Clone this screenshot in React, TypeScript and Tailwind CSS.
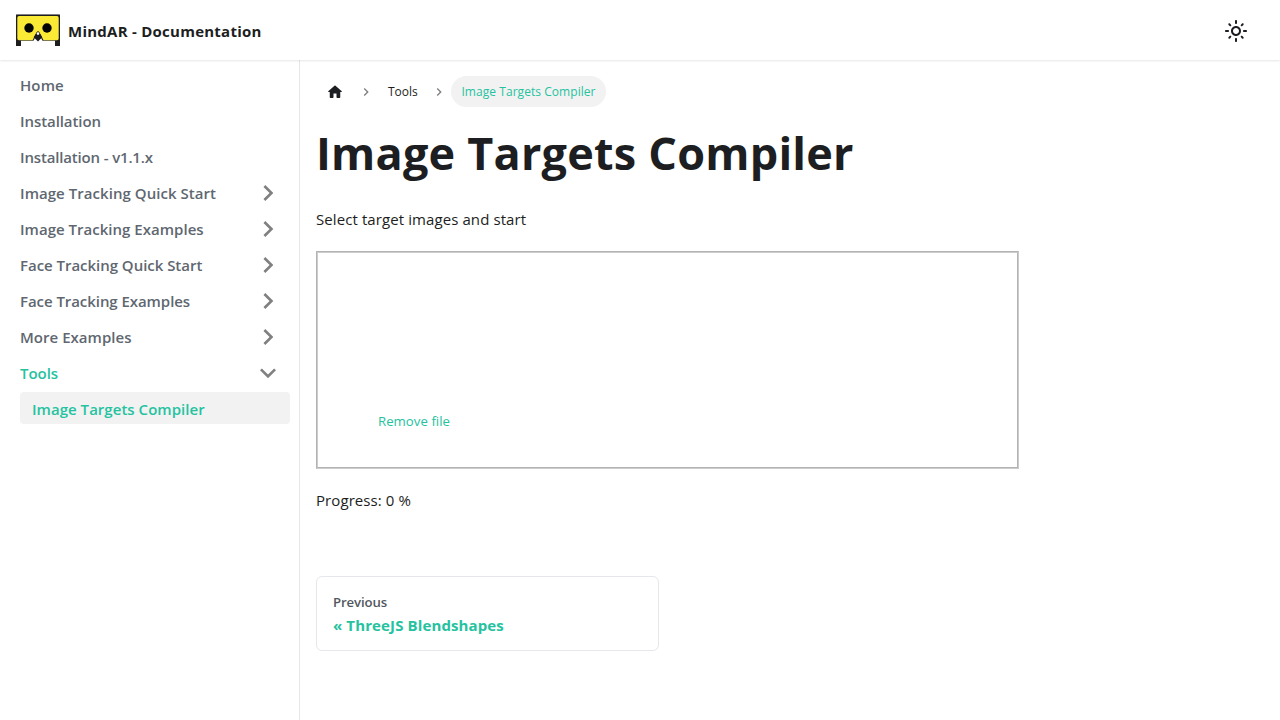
type Item = { label: string; tracking: string; expandable?: boolean };

const items: Item[] = [
  { label: "Home", tracking: "tracking-[0.1px]" },
  { label: "Installation", tracking: "tracking-[-0.08px]" },
  { label: "Installation - v1.1.x", tracking: "tracking-[-0.16px]" },
  { label: "Image Tracking Quick Start", tracking: "tracking-[0.05px]", expandable: true },
  { label: "Image Tracking Examples", tracking: "tracking-[0.02px]", expandable: true },
  { label: "Face Tracking Quick Start", tracking: "tracking-[-0.03px]", expandable: true },
  { label: "Face Tracking Examples", tracking: "tracking-[-0.06px]", expandable: true },
  { label: "More Examples", tracking: "tracking-[0.03px]", expandable: true },
];

function Caret({ className }: { className: string }) {
  return (
    <svg viewBox="0 0 24 24" className={"size-8 shrink-0 fill-[#808080] " + className}>
      <path d="M7.41 15.41L12 10.83l4.59 4.58L18 14l-6-6-6 6z" />
    </svg>
  );
}

function Separator() {
  return (
    <svg viewBox="0 0 24 24" className="size-4 rotate-90 fill-[#7f7f7f]">
      <path d="M7.41 15.41L12 10.83l4.59 4.58L18 14l-6-6-6 6z" />
    </svg>
  );
}

function Logo() {
  return (
    <svg viewBox="0 0 44 33" className="h-[33px] w-11">
      <path d="M0 1.5Q0 .3 1.2 .3H42.8Q44 .3 44 1.5V32H39V27H5V32H0Z" fill="#1d1d1f" />
      <path d="M5 26.8H39V33H5Z" fill="#fff" />
      <path d="M0.5 0.2H43.5V1H0.5Z" fill="#8c8c90" />
      <path d="M3 2H41Q42.7 2 42.7 3.7V24.4Q42.7 26.2 41 26.2H27.5L23.5 18.6Q22 16.2 20.5 18.6L16.6 26.2H3Q1.3 26.2 1.3 24.4V3.7Q1.3 2 3 2Z" fill="#fae935" />
      <path d="M17.2 27.5L20.5 20.5H23.5L26.8 27.5Z" fill="#fff" />
      <path d="M22 17L24 19.4L26.3 23.2L22 27.6L17.7 23.2L20 19.4Z" fill="#1d1d1f" />
      <circle cx="22" cy="19.6" r="1.3" fill="#fff" />
      <circle cx="13" cy="14" r="4.7" fill="#050505" />
      <circle cx="31" cy="14" r="4.7" fill="#050505" />
    </svg>
  );
}

export default function App() {
  return (
    <div className="flex h-[720px] w-[1280px] flex-col overflow-hidden bg-white font-['Open_Sans','Noto_Sans',sans-serif] text-[15px] text-[#1c1e21]">
      <header className="z-10 flex h-[60px] shrink-0 items-center justify-between bg-white pr-8 pl-4 shadow-[0_1px_2px_0_rgba(0,0,0,0.1)]">
        <a className="flex items-center">
          <Logo />
          <span className="ml-2 pt-px leading-6 font-bold tracking-[0.25px]">MindAR - Documentation</span>
        </a>
        <svg viewBox="0 0 24 24" className="mt-px size-6 fill-[#1c1e21]">
          <path d="M12,9c1.65,0,3,1.35,3,3s-1.35,3-3,3s-3-1.35-3-3S10.35,9,12,9 M12,7c-2.76,0-5,2.24-5,5s2.24,5,5,5s5-2.24,5-5 S14.76,7,12,7L12,7z M2,13l2,0c0.55,0,1-0.45,1-1s-0.45-1-1-1l-2,0c-0.55,0-1,0.45-1,1S1.45,13,2,13z M20,13l2,0c0.55,0,1-0.45,1-1 s-0.45-1-1-1l-2,0c-0.55,0-1,0.45-1,1S19.45,13,20,13z M11,2v2c0,0.55,0.45,1,1,1s1-0.45,1-1V2c0-0.55-0.45-1-1-1S11,1.45,11,2z M11,20v2c0,0.55,0.45,1,1,1s1-0.45,1-1v-2c0-0.55-0.45-1-1-1C11.45,19,11,19.45,11,20z M5.99,4.58c-0.39-0.39-1.03-0.39-1.41,0 c-0.39,0.39-0.39,1.03,0,1.41l1.06,1.06c0.39,0.39,1.03,0.39,1.41,0s0.39-1.03,0-1.41L5.99,4.58z M18.36,16.95 c-0.39-0.39-1.03-0.39-1.41,0c-0.39,0.39-0.39,1.03,0,1.41l1.06,1.06c0.39,0.39,1.03,0.39,1.41,0c0.39-0.39,0.39-1.03,0-1.41 L18.36,16.95z M19.42,5.99c0.39-0.39,0.39-1.03,0-1.41c-0.39-0.39-1.03-0.39-1.41,0l-1.06,1.06c-0.39,0.39-0.39,1.03,0,1.41 s1.03,0.39,1.41,0L19.42,5.99z M7.05,18.36c0.39-0.39,0.39-1.03,0-1.41c-0.39-0.39-1.03-0.39-1.41,0l-1.06,1.06 c-0.39,0.39-0.39,1.03,0,1.41s1.03,0.39,1.41,0L7.05,18.36z" />
        </svg>
      </header>
      <div className="flex min-h-0 flex-1">
        <nav className="w-[300px] shrink-0 border-r border-[#e5e7ea] pt-2 pr-[9.5px] pl-2 font-semibold text-[#606770]">
          <ul className="flex flex-col gap-1 leading-5">
            {items.map((item) => (
              <li key={item.label} className="flex h-8 items-center justify-between pr-[6px] pl-3">
                <span className={"pt-[2px] " + item.tracking}>{item.label}</span>
                {item.expandable && <Caret className="mt-px rotate-90" />}
              </li>
            ))}
            <li className="flex h-8 items-center justify-between pr-[6px] pl-3 text-[#25c2a0]">
              <span className="pt-[2px] tracking-[-0.05px]">Tools</span>
              <Caret className="mt-px rotate-180" />
            </li>
            <li className="ml-3 flex h-8 items-center rounded bg-[#f2f2f2] pl-3 text-[#25c2a0]">
              <span className="pt-[2px] tracking-[0.03px]">Image Targets Compiler</span>
            </li>
          </ul>
        </nav>
        <main className="flex-1 pt-4 pl-4">
          <ul className="flex h-[31px] items-center text-[12px]">
            <li className="flex w-[38px] justify-center">
              <svg viewBox="0 0 24 24" className="size-[18px] fill-[#1c1e21]">
                <path d="M10 19v-5h4v5c0 .55.45 1 1 1h3c.55 0 1-.45 1-1v-7h1.7c.46 0 .68-.57.33-.87L12.67 3.6c-.38-.34-.96-.34-1.34 0l-8.36 7.53c-.34.3-.13.87.33.87H5v7c0 .55.45 1 1 1h3c.55 0 1-.45 1-1z" />
              </svg>
            </li>
            <li className="ml-1 flex"><Separator /></li>
            <li className="ml-[14px] w-[30px] tracking-[-0.05px] whitespace-nowrap">Tools</li>
            <li className="ml-[13px] flex"><Separator /></li>
            <li className="ml-1 flex h-[31px] w-[155px] items-center justify-center rounded-full bg-[#f2f2f2] tracking-[0.05px] text-[#25c2a0]">Image Targets Compiler</li>
          </ul>
          <h1 className="mt-[16px] text-[45px] leading-[60px] font-bold tracking-[0.22px]">Image Targets Compiler</h1>
          <p className="mt-[24px] leading-6 tracking-[0.09px]">Select target images and start</p>
          <div className="mt-[20px] h-[218px] w-[703px] border border-t-[#b3b3b3] border-r-[#cccccc] border-b-[#cccccc] border-l-[#b3b3b3]">
            <div className="flex size-full items-end border border-t-[#cccccc] border-r-[#b3b3b3] border-b-[#b3b3b3] border-l-[#cccccc] pb-[36px] pl-[60px]">
              <a className="text-[13.2px] leading-5 tracking-[0.04px] text-[#25c2a0]">Remove file</a>
            </div>
          </div>
          <p className="mt-[19px] leading-6 tracking-[0.08px]">Progress: 0 %</p>
          <a className="mt-[64px] flex h-[75px] w-[343px] flex-col rounded-md border border-[#e5e7ea] px-4 pt-4">
            <span className="text-[13.2px] leading-[18px] font-semibold tracking-[-0.1px] text-[#525860]">Previous</span>
            <span className="mt-[4px] leading-5 font-bold tracking-[0.12px] text-[#25c2a0]">« ThreeJS Blendshapes</span>
          </a>
        </main>
      </div>
    </div>
  );
}
